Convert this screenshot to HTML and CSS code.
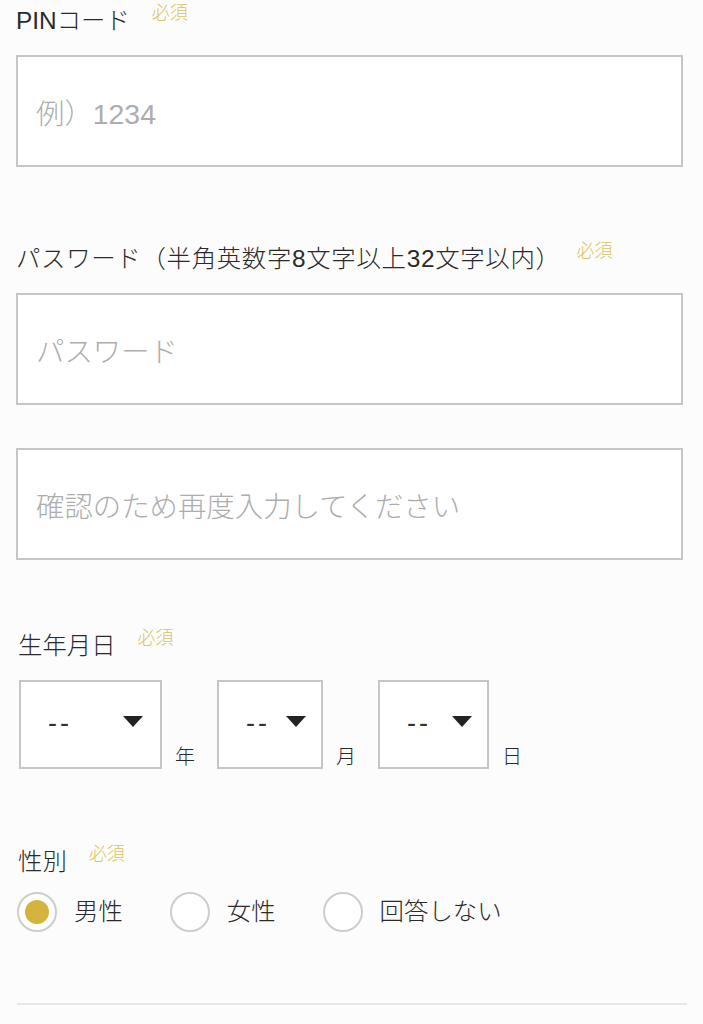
FILE: index.html
```html
<!DOCTYPE html>
<html lang="ja">
<head>
<meta charset="utf-8">
<title>Form</title>
<link rel="stylesheet" href="styles.css">
</head>
<body>
<div class="page">
  <div class="field-label label-pin">PINコード<span class="req">必須</span></div>
  <div class="input input-pin"><span class="ph">例）1234</span></div>

  <div class="field-label label-pw">パスワード（半角英数字8文字以上32文字以内）<span class="req req-pw">必須</span></div>
  <div class="input input-pw"><span class="ph">パスワード</span></div>
  <div class="input input-confirm"><span class="ph">確認のため再度入力してください</span></div>

  <div class="shifted">
    <div class="field-label label-birth">生年月日<span class="req">必須</span></div>
    <div class="date-row">
      <div class="select sel-year"><span class="dash">--</span><span class="caret"></span></div>
      <span class="unit">年</span>
      <div class="select sel-month"><span class="dash">--</span><span class="caret"></span></div>
      <span class="unit">月</span>
      <div class="select sel-day"><span class="dash">--</span><span class="caret"></span></div>
      <span class="unit">日</span>
    </div>

    <div class="field-label label-gender">性別<span class="req">必須</span></div>
  </div>
  <div class="radio-row">
    <label class="radio"><span class="circle checked"><span class="dot"></span></span>男性</label>
    <label class="radio"><span class="circle"></span>女性</label>
    <label class="radio"><span class="circle"></span>回答しない</label>
  </div>

  <div class="divider"></div>
</div>
</body>
</html>
```

FILE: styles.css
```css
html, body {
  margin: 0;
  padding: 0;
  background: #fcfcfc;
}
body {
  font-family: "Liberation Sans", "Noto Sans CJK JP", sans-serif;
  font-weight: 300;
  color: #2a2a2a;
  width: 703px;
  height: 1024px;
  overflow: hidden;
}
.page {
  padding: 5px 20px 0 16px;
}
.field-label {
  display: flex;
  align-items: flex-start;
  font-size: 24.4px;
  line-height: 32px;
  height: 32px;
  white-space: nowrap;
}
.req {
  font-size: 18px;
  line-height: 20px;
  color: #d8c662;
  margin-left: 22px;
  margin-top: -2px;
  letter-spacing: 0;
}
.label-pw {
  letter-spacing: 0.7px;
}
.req-pw {
  margin-left: 16px;
}
.input {
  box-sizing: border-box;
  height: 112px;
  width: 667px;
  border: 2px solid #c6c6c6;
  background: #ffffff;
  display: flex;
  align-items: center;
  padding-left: 18px;
}
.ph {
  font-size: 28.4px;
  color: #adadad;
}
.input-pin { margin-top: 18px; }
.label-pw { margin-top: 76px; }
.input-pw { margin-top: 18px; }
.input-confirm { margin-top: 43px; }

.shifted {
  padding-left: 2px;
}
.label-birth { margin-top: 70px; }
.date-row {
  margin-top: 18px;
  display: flex;
  align-items: flex-end;
  padding-left: 1px;
}
.select {
  box-sizing: border-box;
  height: 89px;
  border: 2px solid #c6c6c6;
  background: #ffffff;
  display: flex;
  align-items: center;
  justify-content: space-between;
  padding: 0 15px 0 27px;
}
.sel-year { width: 143px; padding-right: 17px; }
.sel-month { width: 106px; }
.sel-day { width: 111px; }
.dash {
  font-family: "Liberation Sans", sans-serif;
  font-weight: 400;
  font-size: 27px;
  letter-spacing: 3px;
  color: #333;
  margin-top: -2px;
}
.caret {
  width: 0;
  height: 0;
  border-left: 10px solid transparent;
  border-right: 10px solid transparent;
  border-top: 11px solid #222;
  margin-top: -6px;
}
.unit {
  font-size: 20px;
  line-height: 24px;
  margin: 0 22px 0 13px;
  color: #2a2a2a;
}
.label-gender { margin-top: 77px; }

.radio-row {
  margin-top: 14px;
  display: flex;
  align-items: center;
  padding-left: 1px;
}
.radio {
  display: flex;
  align-items: center;
  font-size: 24.4px;
  line-height: 40px;
  margin-right: 47px;
  color: #2a2a2a;
}
.circle {
  box-sizing: border-box;
  width: 40px;
  height: 40px;
  border: 2px solid #cdcdcd;
  border-radius: 50%;
  background: #ffffff;
  margin-right: 17px;
  display: flex;
  align-items: center;
  justify-content: center;
}
.dot {
  width: 24px;
  height: 24px;
  border-radius: 50%;
  background: #d4b43c;
}
.divider {
  margin-top: 71px;
  margin-left: 1px;
  width: 670px;
  height: 2px;
  background: #e6e6e6;
}
```
